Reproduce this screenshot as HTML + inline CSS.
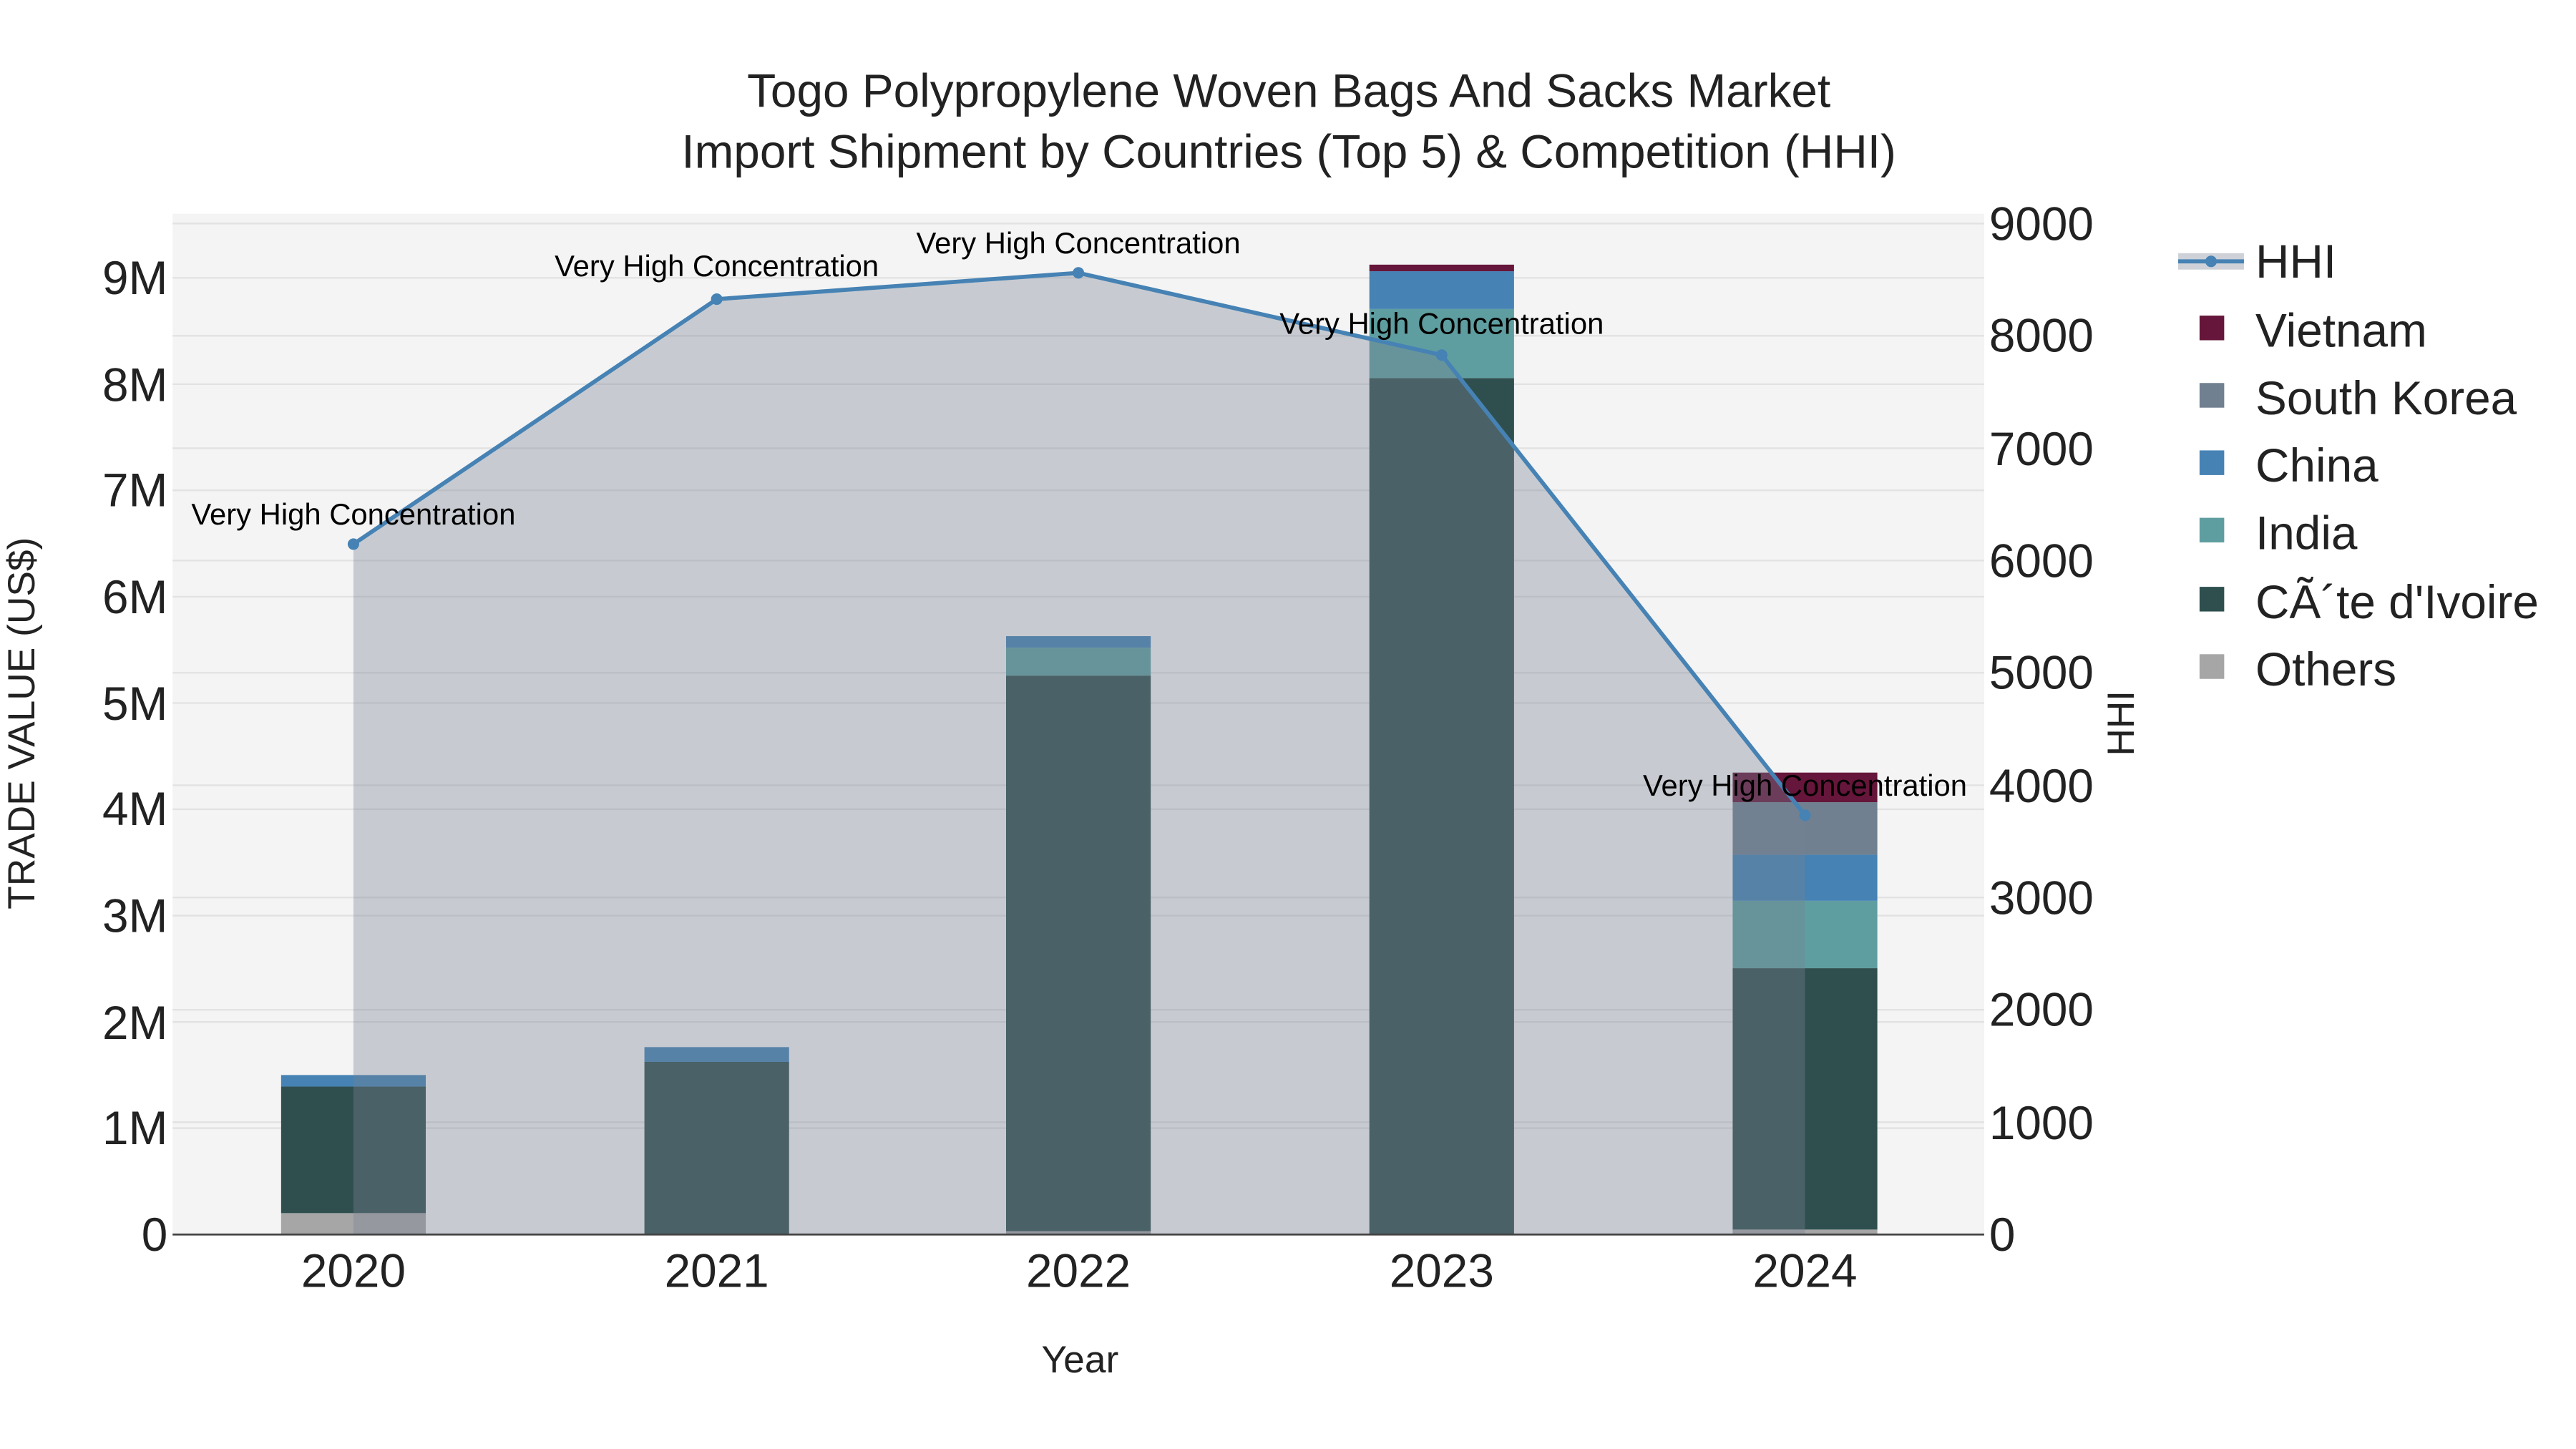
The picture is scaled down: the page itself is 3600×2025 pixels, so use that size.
<!DOCTYPE html>
<html><head><meta charset="utf-8"><style>
html,body{margin:0;padding:0;background:#fff;}
svg{display:block;font-family:"Liberation Sans",sans-serif;}
</style></head><body>
<svg width="3600" height="2025" viewBox="0 0 1567 881.5" preserveAspectRatio="none" xmlns="http://www.w3.org/2000/svg">
<rect x="0" y="0" width="1567" height="881.5" fill="#fff"/>
<rect x="105" y="130" width="1102" height="621" fill="#f4f4f4"/>
<g stroke="#e2e2e2" stroke-width="1">
<line x1="105" x2="1207" y1="686.3" y2="686.3"/><line x1="105" x2="1207" y1="621.7" y2="621.7"/>
<line x1="105" x2="1207" y1="557" y2="557"/><line x1="105" x2="1207" y1="492.3" y2="492.3"/>
<line x1="105" x2="1207" y1="427.7" y2="427.7"/><line x1="105" x2="1207" y1="363" y2="363"/>
<line x1="105" x2="1207" y1="298.3" y2="298.3"/><line x1="105" x2="1207" y1="233.7" y2="233.7"/>
<line x1="105" x2="1207" y1="169" y2="169"/>
<line x1="105" x2="1207" y1="682.7" y2="682.7"/><line x1="105" x2="1207" y1="614.3" y2="614.3"/>
<line x1="105" x2="1207" y1="546" y2="546"/><line x1="105" x2="1207" y1="477.7" y2="477.7"/>
<line x1="105" x2="1207" y1="409.3" y2="409.3"/><line x1="105" x2="1207" y1="341" y2="341"/>
<line x1="105" x2="1207" y1="272.7" y2="272.7"/><line x1="105" x2="1207" y1="204.3" y2="204.3"/>
<line x1="105" x2="1207" y1="136" y2="136"/>
</g>
<g>
<rect x="171" y="738" width="88" height="13" fill="#a6a6a6"/>
<rect x="171" y="661" width="88" height="77" fill="#2f4f4f"/>
<rect x="171" y="654" width="88" height="7" fill="#4682b4"/>
<rect x="392" y="646" width="88" height="105" fill="#2f4f4f"/>
<rect x="392" y="637" width="88" height="9" fill="#4682b4"/>
<rect x="612" y="749" width="88" height="2" fill="#a6a6a6"/>
<rect x="612" y="411" width="88" height="338" fill="#2f4f4f"/>
<rect x="612" y="394" width="88" height="17" fill="#5f9ea0"/>
<rect x="612" y="387" width="88" height="7" fill="#4682b4"/>
<rect x="833" y="230" width="88" height="521" fill="#2f4f4f"/>
<rect x="833" y="188" width="88" height="42" fill="#5f9ea0"/>
<rect x="833" y="165" width="88" height="23" fill="#4682b4"/>
<rect x="833" y="161" width="88" height="4" fill="#66163a"/>
<rect x="1054" y="748" width="88" height="3" fill="#a6a6a6"/>
<rect x="1054" y="589" width="88" height="159" fill="#2f4f4f"/>
<rect x="1054" y="548" width="88" height="41" fill="#5f9ea0"/>
<rect x="1054" y="520" width="88" height="28" fill="#4682b4"/>
<rect x="1054" y="488" width="88" height="32" fill="#708090"/>
<rect x="1054" y="470" width="88" height="18" fill="#66163a"/>
</g>
<polygon points="215,751 215,331 436,182 656,166 877,216 1098,496 1098,751" fill="rgb(120,130,148)" fill-opacity="0.36"/>
<line x1="105" x2="1207" y1="751" y2="751" stroke="#444" stroke-width="1.2"/>
<polyline points="215,331 436,182 656,166 877,216 1098,496" fill="none" stroke="#4682b4" stroke-width="2.5"/>
<g fill="#4682b4"><circle cx="215" cy="331" r="3.5"/><circle cx="436" cy="182" r="3.5"/><circle cx="656" cy="166" r="3.5"/><circle cx="877" cy="216" r="3.5"/><circle cx="1098" cy="496" r="3.5"/></g>
<g font-size="18.2" text-anchor="middle" fill="#000">
<text x="215" y="319">Very High Concentration</text>
<text x="436" y="168">Very High Concentration</text>
<text x="656" y="154">Very High Concentration</text>
<text x="877" y="203">Very High Concentration</text>
<text x="1098" y="484">Very High Concentration</text>
</g>
<g font-size="28.6" text-anchor="middle" fill="#222">
<text x="784" y="65">Togo Polypropylene Woven Bags And Sacks Market</text>
<text x="784" y="102">Import Shipment by Countries (Top 5) &amp; Competition (HHI)</text>
</g>
<g font-size="28.6" text-anchor="end" fill="#222">
<text x="102" y="761">0</text><text x="102" y="696">1M</text><text x="102" y="632">2M</text>
<text x="102" y="567">3M</text><text x="102" y="502">4M</text><text x="102" y="438">5M</text>
<text x="102" y="373">6M</text><text x="102" y="308">7M</text><text x="102" y="244">8M</text>
<text x="102" y="179">9M</text>
</g>
<g font-size="28.6" text-anchor="start" fill="#222">
<text x="1210" y="761">0</text><text x="1210" y="693">1000</text><text x="1210" y="624">2000</text>
<text x="1210" y="556">3000</text><text x="1210" y="488">4000</text><text x="1210" y="419">5000</text>
<text x="1210" y="351">6000</text><text x="1210" y="283">7000</text><text x="1210" y="214">8000</text>
<text x="1210" y="146">9000</text>
</g>
<g font-size="28.6" text-anchor="middle" fill="#222">
<text x="215" y="783">2020</text><text x="436" y="783">2021</text><text x="656" y="783">2022</text>
<text x="877" y="783">2023</text><text x="1098" y="783">2024</text>
</g>
<text x="657" y="835" font-size="23.2" text-anchor="middle" fill="#222">Year</text>
<text transform="translate(21,440) rotate(-90)" font-size="23.2" text-anchor="middle" fill="#222">TRADE VALUE (US$)</text>
<text transform="translate(1298,440) rotate(-90)" font-size="23.2" text-anchor="middle" fill="#222">HHI</text>
<rect x="1325" y="154" width="40" height="10" fill="rgb(120,130,148)" fill-opacity="0.36"/>
<line x1="1325" x2="1365" y1="159" y2="159" stroke="#4682b4" stroke-width="2.5"/>
<circle cx="1345" cy="159" r="3.5" fill="#4682b4"/>
<rect x="1338" y="192" width="15" height="15" fill="#66163a"/>
<rect x="1338" y="233" width="15" height="15" fill="#708090"/>
<rect x="1338" y="274" width="15" height="15" fill="#4682b4"/>
<rect x="1338" y="315" width="15" height="15" fill="#5f9ea0"/>
<rect x="1338" y="357" width="15" height="15" fill="#2f4f4f"/>
<rect x="1338" y="398" width="15" height="15" fill="#a6a6a6"/>
<g font-size="28.6" fill="#222">
<text x="1372" y="169">HHI</text>
<text x="1372" y="211">Vietnam</text>
<text x="1372" y="252">South Korea</text>
<text x="1372" y="293">China</text>
<text x="1372" y="334">India</text>
<text x="1372" y="376">CÃ´te d'Ivoire</text>
<text x="1372" y="417">Others</text>
</g>
</svg>
</body></html>
